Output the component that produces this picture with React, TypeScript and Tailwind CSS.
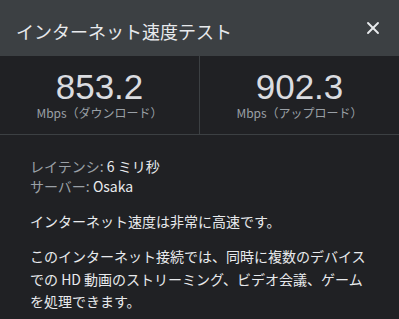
import { X } from "lucide-react";

const font = { fontFamily: '"Noto Sans CJK JP", "Liberation Sans", sans-serif' };

function SpeedCell({ value, label }: { value: string; label: string }) {
  return (
    <div className="flex-1 flex flex-col items-center justify-center">
      <div
        className="text-[35px] leading-[36px] text-[#dadce0]"
        style={{ fontFamily: '"Liberation Sans", Arial, sans-serif' }}
      >
        {value}
      </div>
      <div className="text-[12px] leading-[16px] text-[#9aa0a6]">{label}</div>
    </div>
  );
}

export default function App() {
  return (
    <div className="w-[399px] h-[319px] bg-[#202124] flex flex-col overflow-hidden" style={font}>
      <header className="h-[56px] shrink-0 bg-[#3c4043] flex items-center justify-between px-4">
        <h1 className="text-[18px] text-[#e8eaed] font-normal pt-[6px]">インターネット速度テスト</h1>
        <X className="w-5 h-5 text-[#e8eaed]" strokeWidth={2.25} />
      </header>
      <div className="h-[79px] shrink-0 flex border-b border-[#3c4043]">
        <SpeedCell value="853.2" label="Mbps（ダウンロード）" />
        <div className="w-px bg-[#3c4043]" />
        <SpeedCell value="902.3" label="Mbps（アップロード）" />
      </div>
      <div className="px-[30px] pt-[21px] text-[14px] text-[#e8eaed]">
        <div className="leading-[20px]">
          <div><span className="text-[#9aa0a6]">レイテンシ: </span>6 ミリ秒</div>
          <div><span className="text-[#9aa0a6]">サーバー: </span>Osaka</div>
        </div>
        <p className="mt-[14px] leading-[23px]">インターネット速度は非常に高速です。</p>
        <p className="mt-[12px] leading-[22.5px]">
          このインターネット接続では、同時に複数のデバイスでの HD 動画のストリーミング、ビデオ会議、ゲームを処理できます。
        </p>
      </div>
    </div>
  );
}
